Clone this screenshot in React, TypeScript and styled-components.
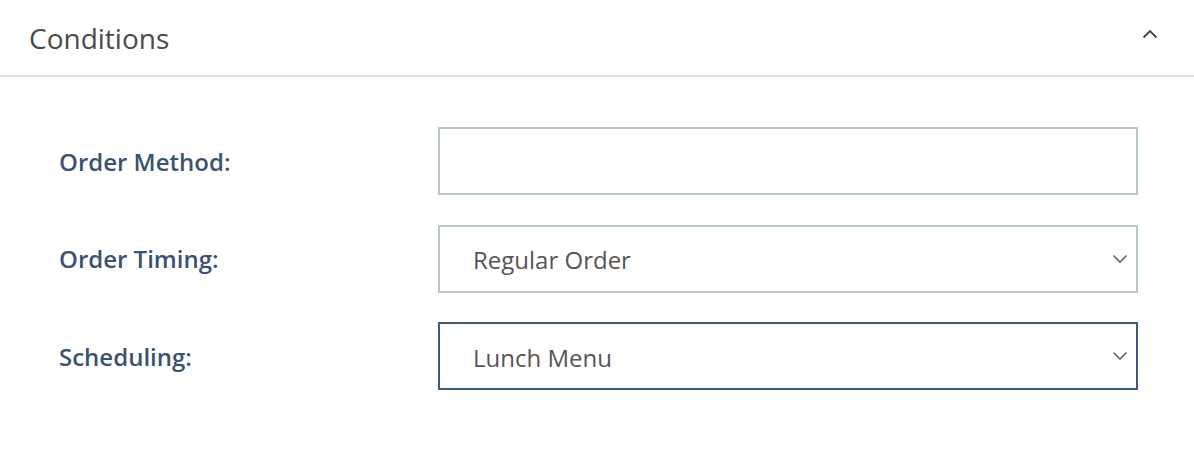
import React, { useState } from 'react';
import styled, { createGlobalStyle } from 'styled-components';

const GlobalStyle = createGlobalStyle`
  body {
    margin: 0;
    background: #fff;
    font-family: 'Open Sans', 'Lato', sans-serif;
  }
`;

const timingOptions = ['Regular Order', 'Advance Order'];
const scheduleOptions = ['Lunch Menu', 'Breakfast Menu', 'Dinner Menu'];

function ChevronDown() {
  return (
    <svg width="16" height="10" viewBox="0 0 16 10" fill="none">
      <path d="M1.5 1.5L8 8L14.5 1.5" stroke="#666" strokeWidth="1.6" />
    </svg>
  );
}

function ChevronUp() {
  return (
    <svg width="16" height="10" viewBox="0 0 16 10" fill="none">
      <path d="M1.5 8.5L8 2L14.5 8.5" stroke="#444" strokeWidth="1.8" />
    </svg>
  );
}

function App() {
  const [open, setOpen] = useState(true);
  const [method, setMethod] = useState('');
  const [timing, setTiming] = useState('Regular Order');
  const [schedule, setSchedule] = useState('Lunch Menu');

  return (
    <Panel>
      <GlobalStyle />
      <Header onClick={() => setOpen(!open)}>
        <Title>Conditions</Title>
        <Toggle>{open ? <ChevronUp /> : <ChevronDown />}</Toggle>
      </Header>

      {open && (
        <Body>
          <Row>
            <Label htmlFor="method">Order Method:</Label>
            <TextInput id="method" value={method} onChange={(e) => setMethod(e.target.value)} />
          </Row>

          <Row>
            <Label htmlFor="timing">Order Timing:</Label>
            <SelectBox>
              <Select id="timing" value={timing} onChange={(e) => setTiming(e.target.value)}>
                {timingOptions.map((o) => (
                  <option key={o}>{o}</option>
                ))}
              </Select>
              <Caret>
                <ChevronDown />
              </Caret>
            </SelectBox>
          </Row>

          <Row>
            <Label htmlFor="schedule">Scheduling:</Label>
            <SelectBox>
              <Select id="schedule" $active value={schedule} onChange={(e) => setSchedule(e.target.value)}>
                {scheduleOptions.map((o) => (
                  <option key={o}>{o}</option>
                ))}
              </Select>
              <Caret>
                <ChevronDown />
              </Caret>
            </SelectBox>
          </Row>
        </Body>
      )}
    </Panel>
  );
}

const Panel = styled.section`
  width: 1194px;
  height: 450px;
  background: #fff;
`;
const Header = styled.div`
  height: 77px;
  display: flex;
  align-items: center;
  justify-content: space-between;
  padding: 0 36px 0 29px;
  box-sizing: border-box;
  border-bottom: 2px solid #dedede;
  cursor: pointer;
`;
const Title = styled.h2`
  margin: 0;
  font-size: 28px;
  font-weight: 400;
  color: #4a4a4a;
`;
const Toggle = styled.span`
  display: flex;
  margin-top: -8px;
`;
const Body = styled.div`
  display: flex;
  flex-direction: column;
  gap: 29.5px;
  padding: 50px 56px 0 59px;
`;
const Row = styled.div`
  display: grid;
  grid-template-columns: 379px 700px;
  align-items: center;
`;
const Label = styled.label`
  font-size: 24px;
  font-weight: 600;
  color: #3b5373;
`;
const fieldCss = `
  width: 100%;
  height: 68px;
  box-sizing: border-box;
  border: 2px solid #b7c6c8;
  border-radius: 0;
  background: #fff;
  font-family: 'Open Sans', 'Lato', sans-serif;
  font-size: 24px;
  color: #555;
  padding: 2px 33px 0;
  outline: none;
`;
const TextInput = styled.input`
  ${fieldCss}
`;
const SelectBox = styled.div`
  position: relative;
`;
const Select = styled.select<{ $active?: boolean }>`
  ${fieldCss}
  appearance: none;
  border-color: ${(p) => (p.$active ? '#3a5a80' : '#b7c6c8')};
`;
const Caret = styled.span`
  position: absolute;
  right: 10px;
  top: 50%;
  transform: translateY(-50%);
  display: flex;
  pointer-events: none;
`;

export default App;
